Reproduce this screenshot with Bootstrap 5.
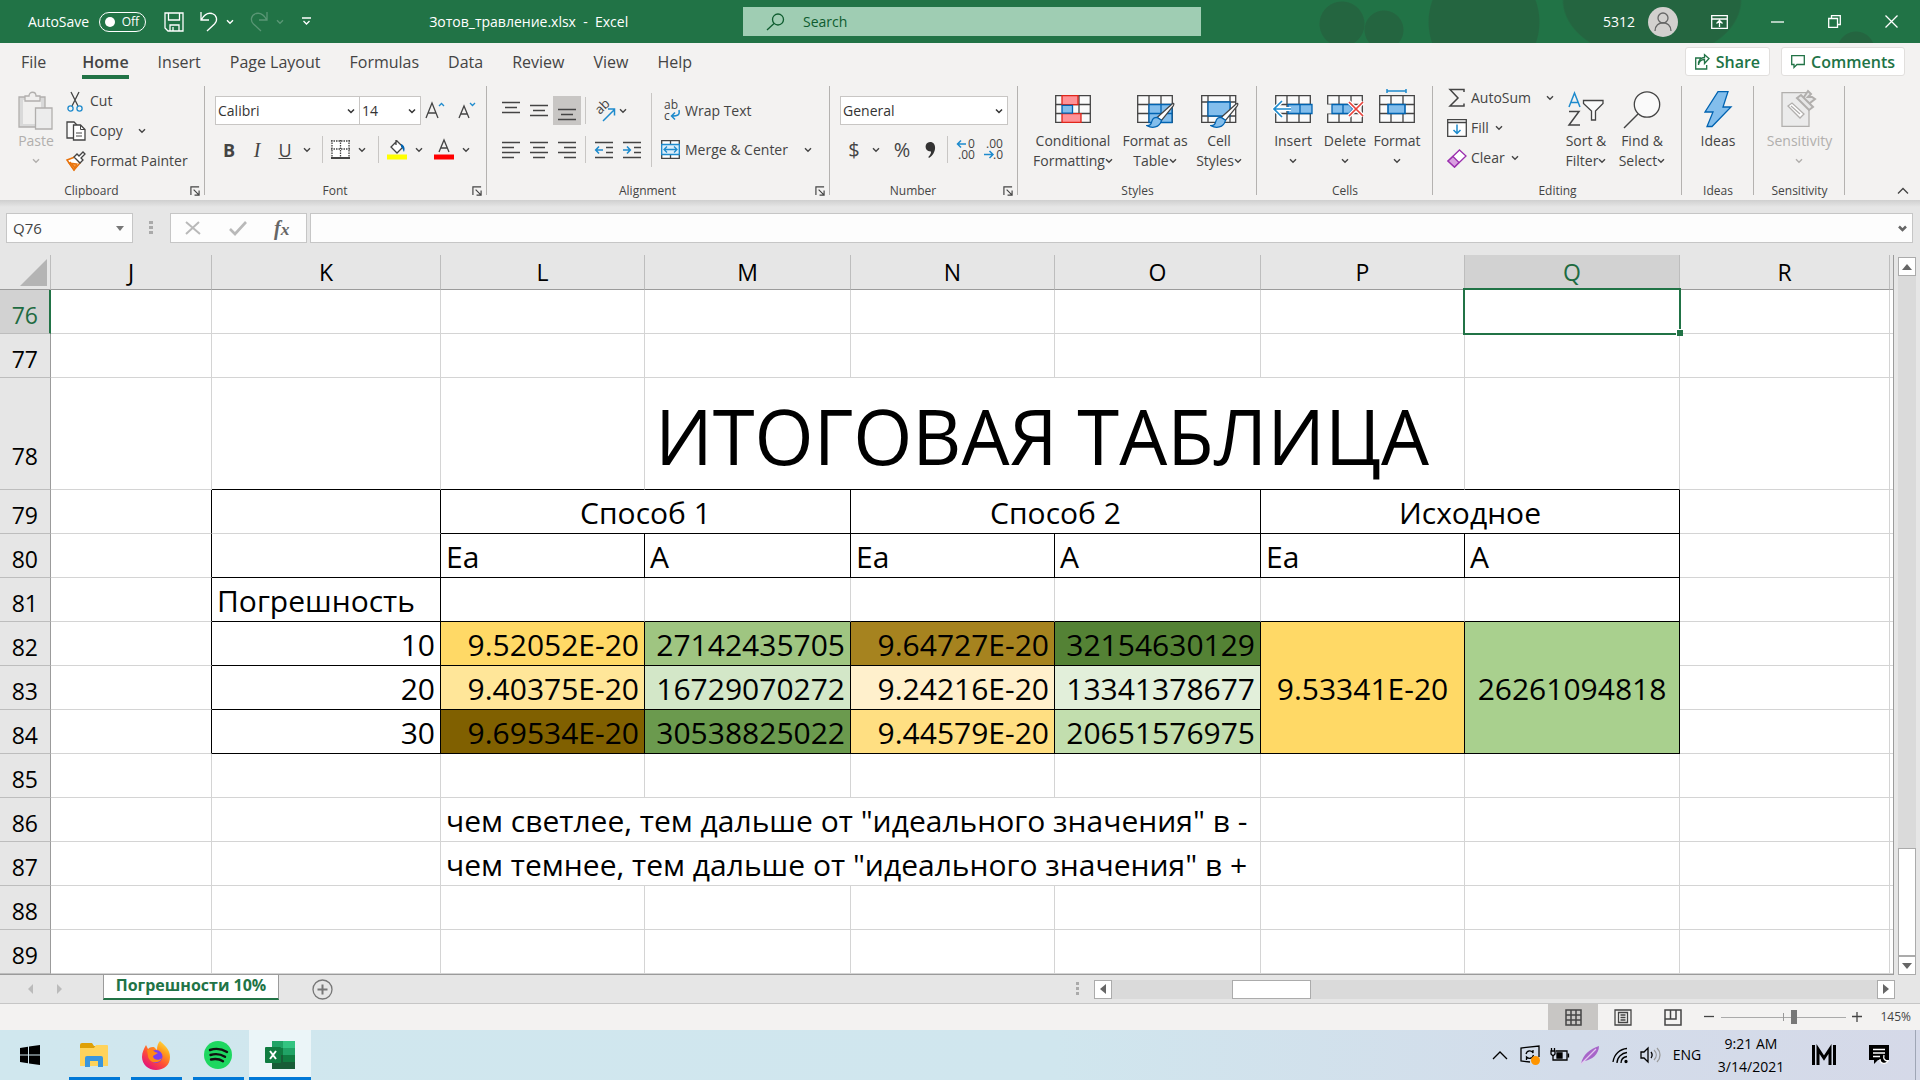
<!DOCTYPE html>
<html lang="en">
<head>
<meta charset="utf-8">
<meta name="viewport" content="width=device-width, initial-scale=1">
<title>Зотов_травление.xlsx - Excel</title>
<link href="https://cdn.jsdelivr.net/npm/bootstrap@5.3.0/dist/css/bootstrap.min.css" rel="stylesheet">
<style>
:root{--xl:#217346;--ink:#444;--blue:#1e8bcd}
body{font-family:"Open Sans","Noto Sans",sans-serif;font-size:14px;line-height:20px;color:var(--ink);background:#e6e6e6}
svg{display:block;flex:none;fill:none;stroke:currentColor;stroke-width:1.3;overflow:visible}
button{border:0;background:none;color:inherit;padding:0;white-space:nowrap}
/* title bar */
.titlebar{height:43px;color:#fff;background:
 radial-gradient(circle at 1342px 24px,#246540 0 22px,transparent 23px),
 radial-gradient(circle at 1384px 30px,#246540 0 19px,transparent 20px),
 radial-gradient(90px 60px at 1652px 0,#246540 0 98%,transparent),
 radial-gradient(56px 60px at 1484px 22px,#246540 0 98%,transparent),
 radial-gradient(circle at 1856px 50px,#246540 0 18px,transparent 19px),var(--xl)}
.quick{width:743px;padding-left:28px}
.pill{width:47px;height:20px;border:1px solid #fff;border-radius:10px;font-size:12px;margin:0 18px 0 10px;padding:0 6px 0 5px}
.pill input{appearance:none;width:10px;height:10px;border-radius:50%;background:#fff;margin:0}
.docname{margin-left:118px;white-space:pre}
.searchbox{width:458px;height:29px;background:#9fcdb3;color:#0e5c2f;padding-left:22px}
.searchbox input{border:0;background:none;width:300px;color:#0e5c2f;padding:0 0 0 2px;outline:0}
.searchbox input::placeholder{color:#0e5c2f;opacity:1}
.avatar{width:30px;height:30px;border-radius:50%;background:#d2d0ce;color:#666;margin:0 22px 0 13px}
.winbtn{width:57px;height:43px}
/* tabs */
.tabs{height:43px;background:#f3f2f1;font-size:16px;padding-left:21px;padding-right:15px}
.tabs a{color:var(--ink);text-decoration:none;margin-right:29px;line-height:24px;padding:7px 0 1px;border-bottom:4px solid transparent}
.tabs a:first-child{margin-right:36px}
.tabs a.on{font-weight:600;border-color:var(--xl)}
.actbtn{height:29px;border:1px solid #e1dfdd;border-radius:3px;background:#fff;color:var(--xl);font-weight:600;font-size:16px;padding:0 9px;gap:6px}
/* ribbon */
.ribbon{height:114px;background:#f3f2f1}
.rgroup{background:linear-gradient(#b4b2b0,#b4b2b0) right top/1px 109px no-repeat;flex:none}
.rbody{height:94px}
.rlabel{height:20px;font-size:12px;line-height:22px}
.rlabel span{flex:1;text-align:center}
.rlabel button{width:22px;padding:2px 0 0 1px}
.two{padding-top:10px;gap:10px}
.two>div{height:29px;display:flex;align-items:center}
.rb{width:28px;height:29px;display:flex;align-items:center;justify-content:center;font-size:18px}
.chv{width:16px;height:29px;display:flex;align-items:center;justify-content:center}
.vsep{width:1px;height:27px;background:#c8c6c4}
.lbtn{display:flex;align-items:center;height:30px}
.big{display:flex;flex-direction:column;align-items:center;padding-top:5px}
.big span{display:block;height:20px}
.big span svg{display:inline-block;margin:0 0 3px 5px}
.big span svg:only-child{margin-left:0}
.dim{color:#b1afad}
.combo{height:29px;border:1px solid #c8c6c4;border-radius:0;background-color:#fff;color:#333;font-size:14px;line-height:20px;padding:0 18px 0 2px;background-position:right 3px center;background-size:10px 10px;--bs-form-select-bg-img:url("data:image/svg+xml,%3csvg xmlns='http://www.w3.org/2000/svg' viewBox='0 0 10 10'%3e%3cpath d='M2 3.5l3 3 3-3' fill='none' stroke='%23333' stroke-width='1.5'/%3e%3c/svg%3e")}
/* formula bar */
.fbar{height:55px;padding:13px 7px 0 6px;background:linear-gradient(#cfcfcf,#e6e6e6 7px)}
.fbox{height:30px;border:1px solid #c6c6c6;background:#fdfdfd;display:flex;align-items:center}
.fbox input{border:0;background:none;outline:0;color:var(--ink);padding:0 0 0 6px;min-width:0;font-size:15px}
/* sheet */
.sheetwrap{height:720px;overflow:hidden;padding-right:4px}
.cells{table-layout:fixed;width:100%;border-collapse:separate;border-spacing:0;color:#000;font-size:30px;line-height:36px;border-right:1px solid #9b9b9b;border-bottom:1px solid #9b9b9b}
.cells td{height:44px;padding:2px 5px 0;border:solid #d4d4d4;border-width:0 1px 1px 0;background:#fff;white-space:nowrap;vertical-align:middle}
.cells thead th{height:35px;padding:0;border:solid;border-width:0 1px 1px 0;border-color:#9b9b9b #bdbdbd #9b9b9b;background:#e6e6e6;text-align:center;font-weight:400;font-size:23px;line-height:30px}
.cells tbody th{padding:6px 12px 0 0;border:solid;border-width:0 1px 1px 0;border-color:#bdbdbd #9b9b9b #bdbdbd;background:#e6e6e6;text-align:right;font-weight:400;font-size:23px;line-height:30px}
.cells thead th.hot,.cells tbody th.hot{background:#d2d2d2;color:#1e6b41}
.cells tbody th.hot{border-right:2px solid var(--xl);padding-right:11px}
.cells tr.tall td{height:112px;font-size:76px;line-height:100px;padding:4px 0 0 10px}
.cells tr.tall th{vertical-align:bottom;padding-bottom:18px}
.cells td.kb{border-bottom-color:#000}
.cells td.kr{border-right-color:#000}
.cells td.ctr{text-align:center}
.cells td.num{text-align:right}
.cells td:last-child,.cells thead th:last-child{border-right:0}
.cursor{position:absolute;inset:-2px;border:2px solid var(--xl)}
.cursor::after{content:"";position:absolute;right:-4px;bottom:-3px;width:7px;height:7px;background:var(--xl);border:solid #fff;border-width:1px 0 0 1px}
.y1{background:#ffd966!important}.y2{background:#ffe699!important}.y3{background:#806000!important}
.g1{background:#9fc581!important}.g2{background:#d3e7c8!important}.g3{background:#6b9a4e!important}
.y4{background:#a6831f!important}.y5{background:#fff0cc!important}.y6{background:#ffdf82!important}
.g4{background:#548235!important}.g5{background:#e2efda!important}.g6{background:#c2deae!important}.g7{background:#a9d08e!important}
.vbar{width:18px;padding-top:2px;margin-right:4px}
.sbtn{width:18px;height:19px;border:1px solid #ababab;background:#fff;display:flex;align-items:center;justify-content:center;color:#666;flex:none}
.strack{background:#dadada}
.vthumb{height:108px;border:1px solid #ababab;background:#fff}
.hthumb{width:79px;height:19px;border:1px solid #ababab;background:#fff;margin-left:120px}
/* bottom rows */
.sheettabs{height:29px;border-bottom:1px solid #c6c6c6;padding-right:25px}
.sheettab{width:176px;height:25px;background:#fff;border:1px solid #9b9b9b;border-width:0 1px 2px;border-bottom-color:var(--xl);color:var(--xl);font-weight:700;font-size:16px;line-height:20px;text-align:center;text-decoration:none}
.status{height:26px;background:#f3f2f1;font-size:12px}
.vbtn{width:50px;height:26px;display:flex;align-items:center;justify-content:center}
.vbtn.on{background:#c8c6c4}
.zoomer{appearance:none;width:125px;height:14px;margin:0 6px 0 7px;background:linear-gradient(#999,#999) 62px center/1px 8px no-repeat,linear-gradient(#aaa,#aaa) center/100% 1px no-repeat}
.zoomer::-webkit-slider-thumb{appearance:none;width:6px;height:14px;background:#777}
.taskbar{height:50px;background:linear-gradient(90deg,#d0e7ee,#d0e6ee 55%,#d3dcea 82%,#d5d9e8);color:#000}
.task{width:62px;height:50px;display:flex;align-items:center;justify-content:center}
.task.start{width:63px;padding-right:3px}
.task.run{background:linear-gradient(#0078d7,#0078d7) center bottom/51px 3px no-repeat}
.task.cur{background:linear-gradient(#0078d7,#0078d7) center bottom/100% 3px no-repeat,#ebf5f8}
.tray{width:30px;height:50px;display:flex;align-items:center;justify-content:center}
</style>
<script src="https://cdn.jsdelivr.net/npm/bootstrap@5.3.0/dist/js/bootstrap.bundle.min.js"></script>
</head>
<body class="d-flex flex-column vh-100 overflow-hidden">
<svg width="0" height="0" class="d-none">
<symbol id="cv" viewBox="0 0 8 6"><path d="M1 1.2l3 3 3-3" stroke-width="1.4"/></symbol>
<symbol id="launch" viewBox="0 0 11 11"><path d="M1 10V1h9M4 4l5.500 5.500M10 5v5H5"/></symbol>
<symbol id="grid5" viewBox="0 0 36 28"><path d="M.7.7h34.600v26.600H.7z" fill="#fafafa"/><path d="M.7 9.500h34.600M.7 18.500h34.600M12 .7v26.600M24 .7v26.600"/></symbol>
<symbol id="brush" viewBox="0 0 30 28"><path d="M27 2c2-1.500 2.500 0 1 2.200L16 19l-4.500-3z" fill="#fff"/><path d="M11.500 16c-4 0-5 2-5.500 4-.6 3-3 4.500-5 4.500 5 3 13 2.500 15-5.500z" fill="#83beec" stroke="#0063b1"/></symbol>
</svg>

<header class="titlebar d-flex align-items-center flex-shrink-0">
 <div class="quick d-flex align-items-center">
  <label for="autosave">AutoSave</label>
  <span class="pill d-flex align-items-center justify-content-between"><input type="checkbox" id="autosave"><span>Off</span></span>
  <button aria-label="Save"><svg width="20" height="20" viewBox="0 0 20 20" stroke-width="1.600"><path d="M1 1h18v18H4l-3-3zM4.500 1v7h11V1M6 19v-6h9v6M9 15v4"/></svg></button>
  <button class="ms-3 d-flex align-items-center" aria-label="Undo"><svg width="18" height="21" viewBox="0 0 18 21" stroke-width="1.700"><path d="M1 1v8h8M1.500 8.500C4 4 8 1.500 12 2.500c5 1.500 6 7 2.500 10.500L7 20"/></svg><svg class="ms-2" width="8" height="6"><use href="#cv"/></svg></button>
  <button class="ms-3 d-flex align-items-center opacity-25" aria-label="Redo"><svg width="18" height="21" viewBox="0 0 18 21" stroke-width="1.700"><path d="M17 1v8H9M16.500 8.500C14 4 10 1.500 6 2.500 1 4 0 9.500 3.500 13l7.500 7"/></svg><svg class="ms-2" width="8" height="6"><use href="#cv"/></svg></button>
  <button style="margin-left:18px" aria-label="Customize toolbar"><svg width="9" height="9" viewBox="0 0 9 9"><path d="M0 1h9M1.500 4l3 3 3-3"/></svg></button>
  <span class="docname">Зотов_травление.xlsx  -  Excel</span>
 </div>
 <label class="searchbox d-flex align-items-center"><svg class="me-3" width="20" height="18" viewBox="0 0 20 18"><circle cx="13" cy="6.500" r="5.500"/><path d="M9 10.500L2 17"/></svg><input type="search" placeholder="Search" aria-label="Search"></label>
 <div class="ms-auto d-flex align-items-center">
  <span>5312</span>
  <span class="avatar d-flex align-items-center justify-content-center"><svg width="20" height="22" viewBox="0 0 20 22"><circle cx="10" cy="7" r="5"/><path d="M2 20c0-11 16-11 16 0"/></svg></span>
  <button class="d-flex justify-content-center" style="width:38px;margin-right:11px" aria-label="Ribbon options"><svg width="17" height="14" viewBox="0 0 17 14"><path d="M.7.700h15.600v12.600H.7zM.7 4h15.600M8.500 12V6M5.500 8.500l3-3 3 3"/></svg></button>
  <button class="winbtn d-flex align-items-center justify-content-center" aria-label="Minimize"><svg width="13" height="2"><path d="M0 1h13"/></svg></button>
  <button class="winbtn d-flex align-items-center justify-content-center" aria-label="Restore"><svg width="13" height="13" viewBox="0 0 13 13"><path d="M.7 3.500h8.800v8.800H.7zM3.500 3.500V.7h8.800v8.800H9.500"/></svg></button>
  <button class="winbtn d-flex align-items-center justify-content-center" aria-label="Close"><svg width="13" height="13"><path d="M.5.500l12 12M12.500.5l-12 12"/></svg></button>
 </div>
</header>

<nav class="tabs d-flex align-items-start flex-shrink-0">
 <a href="#">File</a><a href="#" class="on">Home</a><a href="#">Insert</a><a href="#">Page Layout</a><a href="#">Formulas</a><a href="#">Data</a><a href="#">Review</a><a href="#">View</a><a href="#">Help</a>
 <div class="ms-auto d-flex pt-1" style="gap:11px">
  <button class="actbtn d-flex align-items-center"><svg width="15" height="16" viewBox="0 0 15 16"><path d="M6 4H.7v11h11v-4M3.500 11c.5-4 3-5.500 6-5.500V9.500L14 4.500 9.500.700V3.500C6 3.500 3 6 3.500 11z"/></svg>Share</button>
  <button class="actbtn d-flex align-items-center"><svg width="14" height="14" viewBox="0 0 14 14"><path d="M.7.700h12.600v8.800H6L3 12.500v-3H.7z"/></svg>Comments</button>
 </div>
</nav>

<section class="ribbon d-flex flex-shrink-0" aria-label="Ribbon">
 <div class="rgroup" style="width:205px">
  <div class="rbody d-flex">
   <button class="big dim" style="width:54px;margin-left:9px"><svg width="36" height="40" viewBox="0 0 36 40"><path d="M1 6h26v30H1z" fill="#d9d9d9"/><path d="M5 9h18v24H5z" fill="#f0efee" stroke="none"/><path d="M7 10V5h4c0-5 7-5 7 0h4v5z" fill="#f0efee"/><path d="M17.500 17h16.500v21H17.500z" fill="#ececec"/></svg><span>Paste</span><span><svg width="8" height="6"><use href="#cv"/></svg></span></button>
   <div style="margin-left:3px">
    <button class="lbtn"><svg width="20" height="24" viewBox="0 0 20 24"><path d="M5 3l7 14M13 3L6 17"/><circle cx="4.500" cy="19.500" r="2.600" stroke="#1e8bcd"/><circle cx="13.500" cy="19.500" r="2.600" stroke="#1e8bcd"/></svg><span class="ms-1">Cut</span></button>
    <button class="lbtn"><svg width="20" height="20" viewBox="0 0 20 20"><path d="M7 17H1V1h7l3 3" fill="#fafafa"/><path d="M7.500 4h7l4.500 4.500V19H7.500z" fill="#fff"/><path d="M14.500 4v4.500H19M10 12h6M10 15h6" stroke-width="1"/></svg><span class="ms-1">Copy</span><svg style="margin-left:15px" width="8" height="6"><use href="#cv"/></svg></button>
    <button class="lbtn"><svg width="20" height="20" viewBox="0 0 20 20"><path d="M1 9l8-3 5 6-6 7c-2-3-4-6-7-10z" fill="#fff" stroke="#e8730c" stroke-width="1.500"/><path d="M4 11l5 6M3 12l8 1-3 6z" fill="#f7a04d" stroke="#e8730c"/><path d="M8 6l3-3 2 2 4-4 2 2-4 4 2 2-3 3z" fill="#fff"/></svg><span class="ms-1">Format Painter</span></button>
   </div>
  </div>
  <div class="rlabel d-flex"><span>Clipboard</span><button aria-label="Clipboard settings"><svg class="mx-auto" width="10" height="10"><use href="#launch"/></svg></button></div>
 </div>

 <div class="rgroup" style="width:282px">
  <div class="rbody d-flex flex-column two" style="padding-left:10px">
   <div><select class="form-select combo" style="width:145px" aria-label="Font"><option>Calibri</option></select><select class="form-select combo" style="width:62px;margin-left:-1px" aria-label="Font size"><option>14</option></select>
    <button class="rb" aria-label="Grow font"><svg width="20" height="20" viewBox="0 0 20 20"><path d="M1 17L7 2l6 15M3 12h8"/><path d="M14 5l2.500-2.500L19 5" stroke="#1e8bcd"/></svg></button><button class="rb ms-1" aria-label="Shrink font"><svg width="18" height="20" viewBox="0 0 18 20"><path d="M1 17L6 5l5 12M3 13h6"/><path d="M12 2l2.500 2.500L17 2" stroke="#1e8bcd"/></svg></button></div>
   <div><button class="rb fw-bold">B</button><button class="rb fst-italic" style="font-family:'Liberation Serif',serif;font-size:20px">I</button><button class="rb text-decoration-underline">U</button><button class="chv" aria-label="Underline options"><svg width="8" height="6"><use href="#cv"/></svg></button>
    <i class="vsep" style="margin:0 3px 0 7px"></i><button class="rb" aria-label="Borders"><svg width="19" height="19" viewBox="0 0 19 19"><path d="M1 1h17v16H1z" fill="#fff" stroke="none"/><path d="M1 0v17M18 0v17M0 1h19M9.500 0v17M0 9h19" stroke-dasharray="1.500 1"/><path d="M0 18h19" stroke-width="2"/></svg></button><button class="chv" aria-label="Border options"><svg width="8" height="6"><use href="#cv"/></svg></button>
    <i class="vsep" style="margin:0 4px 0 8px"></i><button class="rb" aria-label="Fill color"><svg width="20" height="21" viewBox="0 0 20 21"><path d="M10 2l6 6-6 6-6-6zM9 6V1" fill="#fff"/><path d="M14 5c3 1 4.500 4 3 8-1-1-1-4-3-5z" fill="#0063b1" stroke="none"/><path d="M0 15.500h20v5H0z" fill="#ff0" stroke="none"/></svg></button><button class="chv" aria-label="Fill color options"><svg width="8" height="6"><use href="#cv"/></svg></button>
    <button class="rb" style="margin-left:3px" aria-label="Font color"><svg width="20" height="21" viewBox="0 0 20 21"><path d="M5 13l5-12 5 12M7 9h6"/><path d="M0 15.500h20v5H0z" fill="red" stroke="none"/></svg></button><button class="chv" aria-label="Font color options"><svg width="8" height="6"><use href="#cv"/></svg></button></div>
  </div>
  <div class="rlabel d-flex"><span>Font</span><button aria-label="Font settings"><svg class="mx-auto" width="10" height="10"><use href="#launch"/></svg></button></div>
 </div>

 <div class="rgroup" style="width:343px">
  <div class="rbody d-flex">
   <div class="d-flex flex-column two" style="padding-left:10px;width:164px">
    <div><button class="rb" aria-label="Top align"><svg width="18" height="20"><path d="M0 1.500h18M3 6.500h12M0 11.500h18"/></svg></button><button class="rb" aria-label="Middle align"><svg width="18" height="20"><path d="M0 4.500h18M3 9.500h12M0 14.500h18"/></svg></button><button class="rb" style="background:#c8c6c4" aria-label="Bottom align"><svg width="18" height="20"><path d="M0 8.500h18M3 13.500h12M0 18.500h18"/></svg></button>
     <i class="vsep" style="margin:0 5px 0 4px"></i><button class="rb" aria-label="Orientation"><svg width="21" height="20" viewBox="0 0 21 20"><text x="0" y="0" font-size="13" transform="translate(5 14) rotate(-45)" fill="#444" stroke="none">ab</text><path d="M8 20L19 9M13 8h6.500v6.500" stroke="#1e8bcd" stroke-width="1.500"/></svg></button><button class="chv" style="margin-left:-4px" aria-label="Orientation options"><svg width="8" height="6"><use href="#cv"/></svg></button></div>
    <div><button class="rb" aria-label="Align left"><svg width="18" height="18"><path d="M0 1.500h18M0 6.500h12M0 11.500h18M0 16.500h12"/></svg></button><button class="rb" aria-label="Center"><svg width="18" height="18"><path d="M0 1.500h18M3 6.500h12M0 11.500h18M3 16.500h12"/></svg></button><button class="rb" aria-label="Align right"><svg width="18" height="18"><path d="M0 1.500h18M6 6.500h12M0 11.500h18M6 16.500h12"/></svg></button>
     <i class="vsep" style="margin:0 4px"></i><button class="rb" aria-label="Decrease indent"><svg width="18" height="18"><path d="M0 1.500h18M11 6.500h7M11 11.500h7M0 16.500h18"/><path d="M8 9H1M4 5.500L.7 9 4 12.500" stroke="#1e8bcd" stroke-width="1.600"/></svg></button><button class="rb" aria-label="Increase indent"><svg width="18" height="18"><path d="M0 1.500h18M11 6.500h7M11 11.500h7M0 16.500h18"/><path d="M0 9h7M4 5.500L7.300 9 4 12.500" stroke="#1e8bcd" stroke-width="1.600"/></svg></button></div>
   </div>
   <i class="vsep" style="height:74px;margin-top:7px"></i>
   <div class="d-flex flex-column two" style="padding-left:9px">
    <div><button class="lbtn"><svg width="20" height="22" viewBox="0 0 20 22"><text x="3" y="9" font-size="12" fill="#444" stroke="none">ab</text><text x="3" y="20" font-size="12" fill="#444" stroke="none">c</text><path d="M18 10c1 5-1 6-7 6M14 12.500L10.500 16l3.500 3.500" stroke="#1e8bcd" stroke-width="1.500"/></svg><span class="ms-1">Wrap Text</span></button></div>
    <div><button class="lbtn"><svg width="19" height="19" viewBox="0 0 19 19"><path d="M.7.700h17.600v17.600H.7zM9.500.700v17.600" fill="#fff"/><path d="M.7 4.500h17.600v10H.7z" fill="#dceefa" stroke="#1e8bcd"/><path d="M3 9.500h13M6 6.500l-3 3 3 3M13 6.500l3 3-3 3" stroke="#1e8bcd"/></svg><span style="margin-left:5px">Merge &amp; Center</span></button><button class="chv" style="margin-left:12px" aria-label="Merge options"><svg width="8" height="6"><use href="#cv"/></svg></button></div>
   </div>
  </div>
  <div class="rlabel d-flex"><span>Alignment</span><button aria-label="Alignment settings"><svg class="mx-auto" width="10" height="10"><use href="#launch"/></svg></button></div>
 </div>

 <div class="rgroup" style="width:188px">
  <div class="rbody d-flex flex-column two" style="padding-left:10px">
   <div><select class="form-select combo" style="width:168px" aria-label="Number format"><option>General</option></select></div>
   <div><button class="rb" style="font-size:20px">$</button><button class="chv me-1" aria-label="Currency options"><svg width="8" height="6"><use href="#cv"/></svg></button><button class="rb" style="font-size:20px">%</button><button class="rb" aria-label="Comma style"><svg width="11" height="18" viewBox="0 0 11 18"><path d="M5 1c7 0 7 11-1 16l-.7-1c2-2 3-4 2.700-5.500C-1 11-1 1 5 1z" fill="#333" stroke="none"/></svg></button>
    <i class="vsep" style="margin:0 4px 0 3px"></i><button class="rb" aria-label="Increase decimal"><svg width="20" height="21" viewBox="0 0 20 21"><text x="12" y="9" font-size="12" fill="#444" stroke="none">0</text><text x="2" y="20" font-size="12" fill="#444" stroke="none">.00</text><path d="M10 5H1M5 1.500L1.500 5 5 8.500" stroke="#1e8bcd" stroke-width="1.500"/></svg></button><button class="rb" aria-label="Decrease decimal"><svg width="20" height="21" viewBox="0 0 20 21"><text x="2" y="9" font-size="12" fill="#444" stroke="none">.00</text><text x="9" y="20" font-size="12" fill="#444" stroke="none">.0</text><path d="M0 15.500h9M5.500 12L9 15.500 5.500 19" stroke="#1e8bcd" stroke-width="1.500"/></svg></button></div>
  </div>
  <div class="rlabel d-flex"><span>Number</span><button aria-label="Number settings"><svg class="mx-auto" width="10" height="10"><use href="#launch"/></svg></button></div>
 </div>

 <div class="rgroup" style="width:239px">
  <div class="rbody d-flex" style="padding-left:9px">
   <button class="big" style="width:92px"><svg width="36" height="40" viewBox="0 0 36 40"><use href="#grid5" y="4" width="36" height="28"/><path d="M7 4.700h16v9H7zM7 22.700h19v8.600H7z" fill="#ff9297" stroke="#e0261b"/><path d="M7 14.300h10.500v7.800H7z" fill="#83beec" stroke="#0063b1"/></svg><span>Conditional</span><span>Formatting<svg width="8" height="6"><use href="#cv"/></svg></span></button>
   <button class="big" style="width:72px"><svg width="40" height="40" viewBox="0 0 40 40"><use href="#grid5" x="2" y="4" width="36" height="28"/><path d="M14 13.500h23v18H14z" fill="#83beec" stroke="#0063b1"/><path d="M14 22.500h23M26 13.500v18" stroke="#0063b1"/><use href="#brush" x="11" y="11" width="29" height="27"/></svg><span>Format as</span><span>Table<svg width="8" height="6"><use href="#cv"/></svg></span></button>
   <button class="big" style="width:56px"><svg width="40" height="40" viewBox="0 0 40 40"><path d="M2.700 4.700h34v26.600h-34zM2.700 11h34M2.700 25h34M9 4.700v26.600M31 4.700v26.600" fill="#fafafa"/><path d="M9 11h22v14H9z" fill="#83beec" stroke="#0063b1"/><use href="#brush" x="11" y="11" width="29" height="27"/></svg><span>Cell</span><span>Styles<svg width="8" height="6"><use href="#cv"/></svg></span></button>
  </div>
  <div class="rlabel d-flex"><span>Styles</span></div>
 </div>

 <div class="rgroup" style="width:176px">
  <div class="rbody d-flex" style="padding-left:10px">
   <button class="big" style="width:52px"><svg width="40" height="40" viewBox="0 0 40 40"><use href="#grid5" x="2" y="4" width="36" height="28"/><path d="M15 13.500h24v9H15zM27 13.500v9" fill="#83beec" stroke="#0063b1"/><path d="M18 18H1M9 10l-8 8 8 8" stroke="#fff" stroke-width="4"/><path d="M18 18H1M9 10l-8 8 8 8" stroke="#1e8bcd" stroke-width="1.700"/></svg><span>Insert</span><span><svg width="8" height="6"><use href="#cv"/></svg></span></button>
   <button class="big" style="width:52px"><svg width="40" height="40" viewBox="0 0 40 40"><use href="#grid5" x="2" y="4" width="36" height="28"/><path d="M0 13.500h7v9H0z" fill="#f3f2f1" stroke="none"/><path d="M7 13.500h17l4 4.500-4 4.500H7zM18 13.500v9" fill="#83beec" stroke="#0063b1"/><path d="M24 11l14 14M38 11L24 25" stroke="#fff" stroke-width="4"/><path d="M24 11l14 14M38 11L24 25" stroke="#e8433c" stroke-width="1.700"/></svg><span>Delete</span><span><svg width="8" height="6"><use href="#cv"/></svg></span></button>
   <button class="big" style="width:52px"><svg width="40" height="40" viewBox="0 0 40 40"><use href="#grid5" x="2" y="4" width="36" height="28"/><path d="M11 13.500h17v9H11z" fill="#83beec" stroke="#0063b1" stroke-width="1.600"/><path d="M10 0h19M10-2v4M29-2v4" stroke="#1e8bcd" stroke-width="1.500"/></svg><span>Format</span><span><svg width="8" height="6"><use href="#cv"/></svg></span></button>
  </div>
  <div class="rlabel d-flex"><span>Cells</span></div>
 </div>

 <div class="rgroup" style="width:249px">
  <div class="rbody d-flex" style="padding-left:14px">
   <div class="d-flex flex-column" style="width:111px;gap:6px">
    <div class="d-flex align-items-center"><button class="lbtn" style="height:24px"><svg width="20" height="20" viewBox="0 0 20 20"><path d="M17 4V1.500H3L11 10l-8 8h14V15.500" stroke-width="1.500"/></svg><span class="ms-1">AutoSum</span></button><button class="ms-auto me-1" aria-label="AutoSum options"><svg width="8" height="6"><use href="#cv"/></svg></button></div>
    <button class="lbtn" style="height:24px"><svg width="20" height="18" viewBox="0 0 20 18"><path d="M.7.700h18.600v16.600H.7zM.7 3.500h18.600" fill="#fff"/><path d="M10 5.500v9M6.500 11l3.500 3.500 3.500-3.500" stroke="#1e8bcd" stroke-width="1.500"/></svg><span class="ms-1">Fill</span><svg style="margin-left:6px" width="8" height="6"><use href="#cv"/></svg></button>
    <button class="lbtn" style="height:24px"><svg width="20" height="19" viewBox="0 0 20 19"><path d="M12.500 1L19 7 7.500 18 1 12z" fill="#fff" stroke="#9b2fae"/><path d="M6 7.500l6 6L7.500 18 1 12z" fill="#d9a0e0" stroke="#9b2fae"/></svg><span class="ms-1">Clear</span><svg style="margin-left:6px" width="8" height="6"><use href="#cv"/></svg></button>
   </div>
   <button class="big" style="width:56px"><svg width="36" height="40" viewBox="0 0 36 40"><path d="M1 16L6.500 2 12 16M3 11.500h7" stroke="#1e8bcd" stroke-width="1.500"/><path d="M1 20.500h10L1 34h11" stroke-width="1.500"/><path d="M15.500 9.500h19.500v3l-7.500 7.500v9h-4v-9l-8-7.500z" fill="#fafafa"/></svg><span>Sort &amp;</span><span>Filter<svg width="8" height="6"><use href="#cv"/></svg></span></button>
   <button class="big" style="width:56px"><svg width="38" height="40" viewBox="0 0 38 40"><circle cx="24" cy="13.500" r="12.700" fill="#fafafa"/><path d="M15 23L1 37" stroke-width="1.500"/></svg><span>Find &amp;</span><span>Select<svg width="8" height="6"><use href="#cv"/></svg></span></button>
  </div>
  <div class="rlabel d-flex"><span>Editing</span></div>
 </div>

 <div class="rgroup" style="width:72px">
  <div class="rbody d-flex justify-content-center"><button class="big"><svg width="28" height="40" viewBox="0 0 28 40"><path d="M14 .700h10L19 16h8L8 35.500H3L9 21H1z" fill="#83beec" stroke="#0063b1"/></svg><span>Ideas</span></button></div>
  <div class="rlabel d-flex"><span>Ideas</span></div>
 </div>
 <div class="rgroup" style="width:91px">
  <div class="rbody d-flex justify-content-center"><button class="big dim"><svg width="36" height="40" viewBox="0 0 36 40"><path d="M1 1.700h27v33.600H1z" fill="#ebebeb"/><path d="M7 15l4-3 12 11-4 4zM10 15l9 8" fill="#fff"/><path d="M16 7l4-3 12 12-4 3zM23 6l4-6 3 3-3 3h4l3 2-5 4" fill="#e6e6e6" stroke-width="2"/></svg><span>Sensitivity</span><span><svg width="8" height="6"><use href="#cv"/></svg></span></button></div>
  <div class="rlabel d-flex"><span>Sensitivity</span></div>
 </div>
 <button class="ms-auto align-self-end" style="padding:0 11px 5px 0" aria-label="Collapse ribbon"><svg width="12" height="8"><path d="M1 6.500l5-5 5 5"/></svg></button>
</section>

<section class="fbar d-flex flex-shrink-0">
 <div class="fbox" style="width:127px"><input type="text" value="Q76" aria-label="Name box" style="width:109px"><svg width="8" height="5"><path d="M0 0h8L4 5z" fill="#777" stroke="none"/></svg></div>
 <svg style="margin:8px 17px 0 16px" width="4" height="14"><path d="M0 0h4v3H0zM0 5h4v3H0zM0 10h4v3H0z" fill="#aaa" stroke="none"/></svg>
 <div class="fbox" style="width:137px;color:#b9b9b9">
  <button style="margin-left:14px" aria-label="Cancel"><svg width="16" height="14"><path d="M1 1l14 12M14 1L1 13" stroke-width="2"/></svg></button>
  <button style="margin-left:28px" aria-label="Enter"><svg width="18" height="15"><path d="M1 8l5 5L17 1" stroke-width="2.600"/></svg></button>
  <button style="margin-left:27px;color:#666;font:italic 700 20px/24px 'Liberation Serif',serif">f<small>x</small></button>
 </div>
 <div class="fbox flex-grow-1" style="margin-left:3px"><input type="text" class="flex-grow-1" aria-label="Formula bar"><svg style="margin-right:5px" width="9" height="7"><path d="M1 1.500l3.500 3.500L8 1.500" stroke="#666" stroke-width="2.500"/></svg></div>
</section>

<main class="d-flex flex-shrink-0">
 <div class="sheetwrap flex-grow-1">
 <table class="cells">
  <colgroup><col style="width:51px"><col style="width:161px"><col style="width:229px"><col style="width:204px"><col style="width:206px"><col style="width:204px"><col style="width:206px"><col style="width:204px"><col style="width:215px"><col style="width:210px"><col></colgroup>
  <thead><tr><th aria-label="Select all"><svg class="ms-auto" style="margin-right:3px" width="27" height="27"><path d="M27 0v27H0z" fill="#b4b4b4" stroke="none"/></svg></th><th>J</th><th>K</th><th>L</th><th>M</th><th>N</th><th>O</th><th>P</th><th class="hot">Q</th><th>R</th><th></th></tr></thead>
  <tbody>
  <tr><th class="hot">76</th><td></td><td></td><td></td><td></td><td></td><td></td><td></td><td class="position-relative"><span class="cursor"></span></td><td></td><td></td></tr>
  <tr><th>77</th><td></td><td></td><td></td><td></td><td></td><td></td><td></td><td></td><td></td><td></td></tr>
  <tr class="tall"><th>78</th><td></td><td class="kb"></td><td class="kb"></td><td class="kb" colspan="4">ИТОГОВАЯ ТАБЛИЦА</td><td class="kb"></td><td></td><td></td></tr>
  <tr><th>79</th><td class="kr"></td><td class="kr"></td><td class="kb kr ctr" colspan="2">Способ 1</td><td class="kb kr ctr" colspan="2">Способ 2</td><td class="kb kr ctr" colspan="2">Исходное</td><td></td><td></td></tr>
  <tr><th>80</th><td class="kr"></td><td class="kr kb"></td><td class="kb kr">Ea</td><td class="kb kr">A</td><td class="kb kr">Ea</td><td class="kb kr">A</td><td class="kb kr">Ea</td><td class="kb kr">A</td><td></td><td></td></tr>
  <tr><th>81</th><td class="kr"></td><td class="kr kb">Погрешность</td><td class="kb"></td><td class="kb"></td><td class="kb"></td><td class="kb"></td><td class="kb"></td><td class="kb kr"></td><td></td><td></td></tr>
  <tr><th>82</th><td class="kr"></td><td class="kr kb num">10</td><td class="kb kr num y1">9.52052E-20</td><td class="kb kr num g1">27142435705</td><td class="kb kr num y4">9.64727E-20</td><td class="kb kr num g4">32154630129</td><td class="kb kr ctr y1" rowspan="3">9.53341E-20</td><td class="kb kr ctr g7" rowspan="3">26261094818</td><td></td><td></td></tr>
  <tr><th>83</th><td class="kr"></td><td class="kr kb num">20</td><td class="kb kr num y2">9.40375E-20</td><td class="kb kr num g2">16729070272</td><td class="kb kr num y5">9.24216E-20</td><td class="kb kr num g5">13341378677</td><td></td><td></td></tr>
  <tr><th>84</th><td class="kr"></td><td class="kr kb num">30</td><td class="kb kr num y3">9.69534E-20</td><td class="kb kr num g3">30538825022</td><td class="kb kr num y6">9.44579E-20</td><td class="kb kr num g6">20651576975</td><td></td><td></td></tr>
  <tr><th>85</th><td></td><td></td><td></td><td></td><td></td><td></td><td></td><td></td><td></td><td></td></tr>
  <tr><th>86</th><td></td><td></td><td colspan="4">чем светлее, тем дальше от "идеального значения" в -</td><td></td><td></td><td></td><td></td></tr>
  <tr><th>87</th><td></td><td></td><td colspan="4">чем темнее, тем дальше от "идеального значения" в +</td><td></td><td></td><td></td><td></td></tr>
  <tr><th>88</th><td></td><td></td><td></td><td></td><td></td><td></td><td></td><td></td><td></td><td></td></tr>
  <tr><th>89</th><td></td><td></td><td></td><td></td><td></td><td></td><td></td><td></td><td></td><td></td></tr>
  </tbody>
 </table>
 </div>
 <div class="vbar d-flex flex-column">
  <button class="sbtn" aria-label="Scroll up"><svg width="10" height="6"><path d="M5 0l5 6H0z" fill="#666" stroke="none"/></svg></button>
  <div class="strack flex-grow-1 d-flex flex-column justify-content-end"><div class="vthumb"></div></div>
  <button class="sbtn" aria-label="Scroll down"><svg width="10" height="6"><path d="M5 6l5-6H0z" fill="#666" stroke="none"/></svg></button>
 </div>
</main>

<div class="sheettabs d-flex flex-shrink-0">
 <div class="d-flex align-items-center justify-content-end" style="width:103px;gap:24px;padding-right:41px"><svg width="5" height="10"><path d="M5 0v10L0 5z" fill="#bbb" stroke="none"/></svg><svg width="5" height="10"><path d="M0 0v10l5-5z" fill="#bbb" stroke="none"/></svg></div>
 <a href="#" class="sheettab">Погрешности 10%</a>
 <button style="margin-left:33px;color:#777" aria-label="New sheet"><svg width="21" height="21"><circle cx="10.500" cy="10.500" r="9.500"/><path d="M10.500 5.500v10M5.500 10.500h10" stroke-width="2"/></svg></button>
 <div class="ms-auto d-flex align-items-center">
  <svg style="margin-right:15px" width="3" height="14"><path d="M0 0h3v3H0zM0 5h3v3H0zM0 10h3v3H0z" fill="#aaa" stroke="none"/></svg>
  <button class="sbtn" aria-label="Scroll left"><svg width="6" height="10"><path d="M6 0v10L0 5z" fill="#666" stroke="none"/></svg></button>
  <div class="strack" style="width:765px"><div class="hthumb"></div></div>
  <button class="sbtn" aria-label="Scroll right"><svg width="6" height="10"><path d="M0 0v10l6-5z" fill="#666" stroke="none"/></svg></button>
 </div>
</div>

<div class="status d-flex align-items-center justify-content-end flex-shrink-0" style="padding-right:9px">
 <button class="vbtn on" aria-label="Normal view"><svg width="17" height="17"><path d="M1 1h15v15H1zM6 1v15M11 1v15M1 6h15M1 11h15" stroke-width="1.500"/></svg></button>
 <button class="vbtn" aria-label="Page layout view"><svg width="18" height="17"><path d="M1 1h16v15H1zM4.500 3.500h9v10h-9zM6.500 6h5M6.500 8.500h5M6.500 11h5"/></svg></button>
 <button class="vbtn" aria-label="Page break view"><svg width="18" height="17"><path d="M1 1h16v15H1zM1 10h11V1M6.500 1v9" stroke-width="1.500"/></svg></button>
 <button style="margin-left:6px" aria-label="Zoom out"><svg width="10" height="10"><path d="M0 4.500h10"/></svg></button>
 <input class="zoomer" type="range" min="0" max="100" value="58" aria-label="Zoom">
 <button aria-label="Zoom in"><svg width="10" height="10"><path d="M0 4.500h10M5 0v10"/></svg></button>
 <span style="margin-left:18px">145%</span>
</div>

<footer class="taskbar d-flex flex-shrink-0">
 <button class="task start" aria-label="Start"><svg width="20" height="20" viewBox="0 0 20 20"><path d="M0 3l8-1.200V9.500H0zM9 1.600L20 0v9.500H9zM0 10.500h8v7.700L0 17zM9 10.500h11V20L9 18.400z" fill="#000" stroke="none"/></svg></button>
 <button class="task run" aria-label="File Explorer"><svg width="28" height="24" viewBox="0 0 28 24"><path d="M0 2q0-2 2-2h10l2 3H27v20H0z" fill="#dfa006" stroke="none"/><path d="M0 5h14l2-3h11q1 0 1 1v20H0z" fill="#ffd35b" stroke="none"/><path d="M5 24V15q0-2 2-2h14q2 0 2 2v9h-5v-6h-8v6z" fill="#3a96dd" stroke="none"/></svg></button>
 <button class="task run" aria-label="Firefox"><svg width="28" height="29" viewBox="0 0 28 29"><defs><linearGradient id="fx" x1="1" y1="0" x2=".3" y2="1"><stop offset="0" stop-color="#fff44f"/><stop offset=".35" stop-color="#ffa01e"/><stop offset=".65" stop-color="#ff5035"/><stop offset="1" stop-color="#e3127c"/></linearGradient></defs><path d="M18 0c4 4 10 8 10 16 0 8-6 13-14 13S0 23 0 16C0 11 2 8 4 4l2 4c2-2 4-2 6-2l3 3c0-4 1-7 3-9z" fill="url(#fx)" stroke="none"/><circle cx="14" cy="15.500" r="6.500" fill="#7a3ff0" stroke="none"/><path d="M5 9c3-2 6 0 8 2l3 1-5 3c0 4 6 5 9 2-2 6-13 6-14-2z" fill="#ff8a16" stroke="none"/></svg></button>
 <button class="task run" aria-label="Spotify"><svg width="28" height="28" viewBox="0 0 28 28"><circle cx="14" cy="14" r="14" fill="#1ed760" stroke="none"/><path d="M6 9c6-2 12-1 17 2M6.500 14c5-1.500 10-1 14.500 1.800M7 18.500c4.500-1 8.500-.5 12 1.700" stroke="#111" stroke-width="2.400" stroke-linecap="round"/></svg></button>
 <button class="task cur" aria-label="Excel"><svg width="30" height="28" viewBox="0 0 30 28"><path d="M7 0h11v7H7z" fill="#21a366" stroke="none"/><path d="M18 0h12v7H18z" fill="#33c481" stroke="none"/><path d="M7 7h11v7H7z" fill="#107c41" stroke="none"/><path d="M18 7h12v7H18z" fill="#21a366" stroke="none"/><path d="M7 14h23v14H7z" fill="#185c37" stroke="none"/><path d="M18 14h12v7H18z" fill="#107c41" stroke="none"/><rect y="6" width="16" height="16" rx="1" fill="#107c41" stroke="none"/><path d="M5 10l6 8M11 10l-6 8" stroke="#fff" stroke-width="2"/></svg></button>
 <div class="ms-auto d-flex align-items-center">
  <button class="tray" aria-label="Hidden icons"><svg width="16" height="10"><path d="M1 9l7-7 7 7"/></svg></button>
  <button class="tray" aria-label="Update"><svg width="21" height="20" viewBox="0 0 21 20"><path d="M10 17L1 16V3l18-2v11"/><path d="M6 9c1-4 6-4 7-1V5M13.500 10c-1 4-5 4-7 2v3"/><circle cx="15.500" cy="15.500" r="4.500" fill="#ff9500" stroke="none"/></svg></button>
  <button class="tray" aria-label="Battery"><svg width="20" height="15" viewBox="0 0 20 15"><path d="M6 3h11v9H4M18.500 5.500v4M1 3h4v3L3 8 1 6zM1.500 0v3M4.500 0v3M3 8v4h2"/><path d="M7 5h5v5H7z" fill="#000"/></svg></button>
  <button class="tray" aria-label="Pen"><svg width="18" height="19" viewBox="0 0 18 19"><path d="M0 18C2 8 9 3 18 0c0 8-7 14-15 15z" fill="#a765c9" stroke="none"/><path d="M0 18L15 3" stroke="#e3c9f0"/></svg></button>
  <button class="tray" aria-label="Network"><svg width="17" height="17" viewBox="0 0 17 17"><path d="M1 15C2 7 8 2 15 1.500M5 16c0-6 5-10 10-10.500M9 16c0-4 3-6 6-6.500"/><circle cx="14" cy="14.500" r="1" fill="#000"/></svg></button>
  <button class="tray" aria-label="Volume"><svg width="20" height="16" viewBox="0 0 20 16"><path d="M1 5h3l4-4v14l-4-4H1zM11 5c1.500 2 1.500 4 0 6"/><path d="M14 3c3 3 3 7 0 10M17 1c4 4 4 10 0 14" stroke="#999"/></svg></button>
  <span class="text-center" style="width:44px">ENG</span>
  <time class="text-center" style="width:84px;line-height:23px">9:21 AM<br>3/14/2021</time>
  <button class="d-flex justify-content-center" style="width:62px" aria-label="M app"><svg width="24" height="20"><path d="M1.500 0v20M22.500 0v20M6 20V4l6 9 6-9v16" stroke-width="3"/></svg></button>
  <button style="margin-left:14px;margin-right:16px" aria-label="Notifications"><svg width="20" height="20" viewBox="0 0 20 20"><path d="M0 0h20v15H9l-4 4v-4H0z" fill="#000" stroke="none"/><path d="M4 4.500h12M4 8h12M4 11.500h7" stroke="#fff"/><path d="M15 10c-1 4 1 6 4 6-2 4-8 3-8-2" fill="#000" stroke="#fff"/></svg></button>
  <i style="width:5px;height:50px;margin-left:10px;border-left:1px solid #9fa6b5"></i>
 </div>
</footer>
</body>
</html>
